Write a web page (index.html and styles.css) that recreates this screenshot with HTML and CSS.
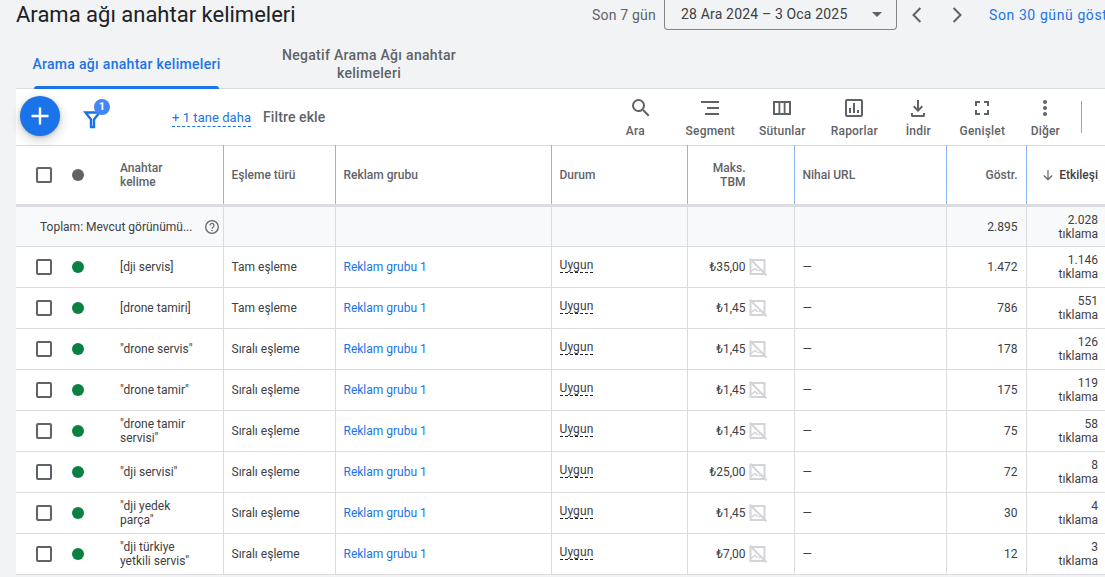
FILE: index.html
```html
<!DOCTYPE html>
<html lang="tr">
<head>
<meta charset="utf-8">
<title>Arama ağı anahtar kelimeleri</title>
<link rel="stylesheet" href="styles.css">
</head>
<body>
<svg class="defs" width="0" height="0" aria-hidden="true">
  <symbol id="noimg" viewBox="0 0 18 18">
    <path d="M1.500 2h14v14h-14z" fill="none" stroke="#d2d4d7" stroke-width="2"/>
    <path d="M1 .8 17.500 17.300" stroke="#d2d4d7" stroke-width="2"/>
    <path d="M2 13.500l4-3 3 2.500M10 13l2-1.500 3 2.500" fill="none" stroke="#d2d4d7" stroke-width="1.500"/>
  </symbol>
</svg>
<header class="top">
  <h1 class="title">Arama ağı anahtar kelimeleri</h1>
  <div class="dates">
    <span class="preset">Son 7 gün</span>
    <div class="range"><span>28 Ara 2024 – 3 Oca 2025</span><i class="caret"></i></div>
    <svg class="chev" width="24" height="24" viewBox="0 0 24 24"><path d="M15.400 5 8.500 12l6.900 7" fill="none" stroke="#5f6368" stroke-width="2"/></svg>
    <svg class="chev" width="24" height="24" viewBox="0 0 24 24"><path d="M8.600 5l6.900 7-6.900 7" fill="none" stroke="#5f6368" stroke-width="2"/></svg>
    <a class="show30">Son 30 günü göster</a>
  </div>
</header>
<nav class="tabs">
  <div class="tab active">Arama ağı anahtar kelimeleri</div>
  <div class="tab second">Negatif Arama Ağı anahtar kelimeleri</div>
</nav>
<section class="panel">
  <div class="toolbar">
    <button class="fab" aria-label="Ekle"><svg width="24" height="24" viewBox="0 0 24 24"><path d="M12 3.500v17M3.500 12h17" stroke="#fff" stroke-width="2.400"/></svg></button>
    <div class="filter">
      <svg width="24" height="24" viewBox="0 0 24 24"><path d="M4.500 7.500h14L13 14.500V22h-3v-7.500z" fill="none" stroke="#1a73e8" stroke-width="2.400"/></svg>
      <span class="badge">1</span>
    </div>
    <a class="more">+ 1 tane daha</a>
    <span class="addf">Filtre ekle</span>
    <div class="tools">
      <div class="tool t-ara"><svg width="24" height="24" viewBox="0 0 24 24"><path fill="#5f6368" d="M15.500 14h-.79l-.28-.27A6.470 6.470 0 0 0 16 9.500 6.500 6.500 0 1 0 9.500 16c1.610 0 3.090-.59 4.230-1.570l.27.28v.79l5 4.990L20.490 19zm-6 0C7.010 14 5 11.990 5 9.500S7.010 5 9.500 5 14 7.010 14 9.500 11.990 14 9.500 14z"/></svg><span>Ara</span></div>
      <div class="tool t-seg"><svg width="24" height="24" viewBox="0 0 24 24"><path fill="#5f6368" d="M3 5h18v2H3zM9 11h12v2H9zM7 17h14v2H7z"/></svg><span>Segment</span></div>
      <div class="tool t-sut"><svg width="24" height="24" viewBox="0 0 24 24"><path fill="#5f6368" d="M3 5v14h18V5zm2 2h3.500v10H5zm5.300 0h3.400v10h-3.400zm5.200 0H19v10h-3.500z"/></svg><span>Sütunlar</span></div>
      <div class="tool t-rap"><svg width="24" height="24" viewBox="0 0 24 24"><path fill="#5f6368" d="M19 3H5a2 2 0 0 0-2 2v14a2 2 0 0 0 2 2h14a2 2 0 0 0 2-2V5a2 2 0 0 0-2-2zm0 16H5V5h14zM7 12h2v5H7zm4-5h2v10h-2zm4 7h2v3h-2z"/></svg><span>Raporlar</span></div>
      <div class="tool t-ind"><svg width="24" height="24" viewBox="0 0 24 24"><path fill="#5f6368" d="M13 4v8.170l2.590-2.580L17 11l-5 5-5-5 1.410-1.410L11 12.170V4zM5 17v2.500c0 .8.700 1.500 1.500 1.500h11c.8 0 1.500-.7 1.500-1.500V17h-2v2H7v-2z"/></svg><span>İndir</span></div>
      <div class="tool t-gen"><svg width="24" height="24" viewBox="0 0 24 24"><path fill="#5f6368" d="M5 5h5v2H7v3H5zM14 5h5v5h-2V7h-3zM5 14h2v3h3v2H5zM17 14h2v5h-5v-2h3z"/></svg><span>Genişlet</span></div>
      <div class="tool t-dig"><svg width="24" height="24" viewBox="0 0 24 24"><path fill="#5f6368" d="M12 8a2 2 0 1 0 0-4 2 2 0 0 0 0 4zm0 2a2 2 0 1 0 0 4 2 2 0 0 0 0-4zm0 6a2 2 0 1 0 0 4 2 2 0 0 0 0-4z"/></svg><span>Diğer</span></div>
      <div class="vsep"></div>
    </div>
  </div>
  <table class="grid">
    <colgroup>
      <col class="c1"><col class="c2"><col class="c3"><col class="c4"><col class="c5"><col class="c6"><col class="c7"><col class="c8">
    </colgroup>
    <thead>
      <tr>
        <th class="kw"><div class="kwcell"><i class="box"></i><i class="dot grey"></i><span>Anahtar<br>kelime</span></div></th>
        <th>Eşleme türü</th>
        <th>Reklam grubu</th>
        <th>Durum</th>
        <th class="right tbm">Maks.<br>TBM</th>
        <th>Nihai URL</th>
        <th class="right">Göstr.</th>
        <th class="right sorted"><svg width="14" height="14" viewBox="0 0 14 14"><path d="M7 2v9.500M2.800 7.500 7 11.700l4.200-4.200" fill="none" stroke="#5f6368" stroke-width="1.200"/></svg>Etkileşi</th>
      </tr>
    </thead>
    <tbody>
      <tr class="total">
        <td class="kw"><div class="totalcell"><span>Toplam: Mevcut görünümü...</span><svg width="16" height="16" viewBox="0 0 16 16"><circle cx="8" cy="8" r="6.300" fill="none" stroke="#5f6368" stroke-width="1.300"/><path d="M6 6.500a2 2 0 1 1 3 1.700c-.7.400-1 .8-1 1.500" fill="none" stroke="#5f6368" stroke-width="1.200"/><circle cx="8" cy="11.500" r=".8" fill="#5f6368"/></svg></div></td>
        <td></td><td></td><td></td><td></td><td></td>
        <td class="right">2.895</td>
        <td class="right">2.028<br>tıklama</td>
      </tr>
      <tr>
        <td class="kw"><div class="kwcell"><i class="box"></i><i class="dot"></i><span>[dji servis]</span></div></td>
        <td>Tam eşleme</td><td><a>Reklam grubu 1</a></td><td><span class="status">Uygun</span></td>
        <td><div class="bid"><span>₺35,00</span><svg width="18" height="18"><use href="#noimg"/></svg></div></td>
        <td>—</td><td class="right">1.472</td><td class="right">1.146<br>tıklama</td>
      </tr>
      <tr>
        <td class="kw"><div class="kwcell"><i class="box"></i><i class="dot"></i><span>[drone tamiri]</span></div></td>
        <td>Tam eşleme</td><td><a>Reklam grubu 1</a></td><td><span class="status">Uygun</span></td>
        <td><div class="bid"><span>₺1,45</span><svg width="18" height="18"><use href="#noimg"/></svg></div></td>
        <td>—</td><td class="right">786</td><td class="right">551<br>tıklama</td>
      </tr>
      <tr>
        <td class="kw"><div class="kwcell"><i class="box"></i><i class="dot"></i><span>"drone servis"</span></div></td>
        <td>Sıralı eşleme</td><td><a>Reklam grubu 1</a></td><td><span class="status">Uygun</span></td>
        <td><div class="bid"><span>₺1,45</span><svg width="18" height="18"><use href="#noimg"/></svg></div></td>
        <td>—</td><td class="right">178</td><td class="right">126<br>tıklama</td>
      </tr>
      <tr>
        <td class="kw"><div class="kwcell"><i class="box"></i><i class="dot"></i><span>"drone tamir"</span></div></td>
        <td>Sıralı eşleme</td><td><a>Reklam grubu 1</a></td><td><span class="status">Uygun</span></td>
        <td><div class="bid"><span>₺1,45</span><svg width="18" height="18"><use href="#noimg"/></svg></div></td>
        <td>—</td><td class="right">175</td><td class="right">119<br>tıklama</td>
      </tr>
      <tr>
        <td class="kw"><div class="kwcell"><i class="box"></i><i class="dot"></i><span>"drone tamir<br>servisi"</span></div></td>
        <td>Sıralı eşleme</td><td><a>Reklam grubu 1</a></td><td><span class="status">Uygun</span></td>
        <td><div class="bid"><span>₺1,45</span><svg width="18" height="18"><use href="#noimg"/></svg></div></td>
        <td>—</td><td class="right">75</td><td class="right">58<br>tıklama</td>
      </tr>
      <tr>
        <td class="kw"><div class="kwcell"><i class="box"></i><i class="dot"></i><span>"dji servisi"</span></div></td>
        <td>Sıralı eşleme</td><td><a>Reklam grubu 1</a></td><td><span class="status">Uygun</span></td>
        <td><div class="bid"><span>₺25,00</span><svg width="18" height="18"><use href="#noimg"/></svg></div></td>
        <td>—</td><td class="right">72</td><td class="right">8<br>tıklama</td>
      </tr>
      <tr>
        <td class="kw"><div class="kwcell"><i class="box"></i><i class="dot"></i><span>"dji yedek<br>parça"</span></div></td>
        <td>Sıralı eşleme</td><td><a>Reklam grubu 1</a></td><td><span class="status">Uygun</span></td>
        <td><div class="bid"><span>₺1,45</span><svg width="18" height="18"><use href="#noimg"/></svg></div></td>
        <td>—</td><td class="right">30</td><td class="right">4<br>tıklama</td>
      </tr>
      <tr>
        <td class="kw"><div class="kwcell"><i class="box"></i><i class="dot"></i><span>"dji türkiye<br>yetkili servis"</span></div></td>
        <td>Sıralı eşleme</td><td><a>Reklam grubu 1</a></td><td><span class="status">Uygun</span></td>
        <td><div class="bid"><span>₺7,00</span><svg width="18" height="18"><use href="#noimg"/></svg></div></td>
        <td>—</td><td class="right">12</td><td class="right">3<br>tıklama</td>
      </tr>
    </tbody>
  </table>
</section>
</body>
</html>
```
FILE: styles.css
```css
* { box-sizing: border-box; }
html, body { margin: 0; height: 577px; overflow: hidden; }
body {
  width: 1105px;
  background: #f1f3f4;
  font-family: Roboto, "Liberation Sans", sans-serif;
  color: #3c4043;
  font-size: 12px;
}
.defs { position: absolute; }

.top { display: flex; align-items: flex-start; height: 44px; padding-left: 16px; white-space: nowrap; }
.title { margin: 0; width: 576px; flex: none; font-weight: 400; font-size: 22px; line-height: 30px; color: #202124; }
.dates { display: flex; align-items: center; height: 30px; flex: none; font-size: 14px; color: #5f6368; }
.preset { width: 72px; flex: none; letter-spacing: .2px; }
.range {
  width: 233px; height: 31px; flex: none; margin-top: -1px;
  display: flex; align-items: center; justify-content: space-between;
  padding: 0 0 0 16px;
  border: 1px solid #80868b; border-top: 0; border-radius: 0 0 4px 4px;
  color: #3c4043; letter-spacing: .17px;
}
.caret { width: 0; height: 0; margin-right: 14px; border: 5px solid transparent; border-top-color: #5f6368; border-bottom: 0; }
.chev { flex: none; margin-left: 8px; }
.chev + .chev { margin-left: 16px; }
.show30 { flex: none; margin-left: 20px; color: #1a73e8; font-weight: 400; letter-spacing: .6px; }

.tabs { display: flex; height: 44px; padding-left: 16px; align-items: stretch; }
.tab { font-size: 14px; line-height: 18px; font-weight: 500; text-align: center; color: #5f6368; letter-spacing: .3px; }
.tab.active {
  width: 221px; padding: 11px 0 0; margin-right: 35px; color: #1a73e8;
  position: relative; white-space: nowrap;
}
.tab.active::after {
  content: ""; position: absolute; left: 18px; width: 185px; bottom: -1px; height: 3px;
  background: #1a73e8; border-radius: 3px 3px 0 0;
}
.tab.second { width: 194px; padding-top: 2px; }

.panel { margin-left: 16px; width: 1090px; background: #fff; border-top: 1px solid #dadce0; }
.toolbar { display: flex; align-items: flex-start; height: 56px; position: relative; }
.fab {
  flex: none; width: 40px; height: 40px; margin: 7px 0 0 4px; padding: 0; border: 0; border-radius: 50%;
  background: #1a73e8; display: flex; align-items: center; justify-content: center;
  box-shadow: 0 1px 3px rgba(60,64,67,.3), 0 4px 8px 3px rgba(60,64,67,.15);
}
.filter { flex: none; width: 32px; height: 30px; margin: 14px 0 0 21px; position: relative; }
.filter svg { display: block; margin-top: 2px; }
.badge {
  position: absolute; left: 13px; top: -4px; width: 16px; height: 16px; border-radius: 50%;
  background: #4285f4; color: #fff; font-size: 11px; font-weight: 700; line-height: 16px; text-align: center;
}
.more { flex: none; margin: 20px 0 0 59px; color: #1a73e8; font-size: 13px; line-height: 17px; letter-spacing: .05px; border-bottom: 1px dashed #1a73e8; height: 17px; box-sizing: content-box; }
.addf { flex: none; margin: 20px 0 0 12px; font-size: 14px; line-height: 17px; letter-spacing: .1px; color: #5f6368; font-weight: 500; }
.tools { flex: 1; position: relative; height: 56px; }
.tool { position: absolute; top: 7px; display: flex; flex-direction: column; align-items: center; width: 80px; color: #5f6368; font-weight: 500; }
.tool span { font-size: 12px; line-height: 16px; margin-top: 3px; white-space: nowrap; letter-spacing: .2px; }
.tool svg { display: block; }
.t-ara svg { margin-left: 12px; }
.t-ara { left: 270px; } .t-seg { left: 345px; } .t-sut { left: 417px; } .t-rap { left: 489px; }
.t-ind { left: 553px; } .t-gen { left: 617px; } .t-dig { left: 680px; }
.vsep { position: absolute; left: 756px; top: 12px; width: 1px; height: 32px; background: #9aa0a6; }

.grid { border-collapse: collapse; table-layout: fixed; width: 1090px; border-top: 1px solid #dadce0; }
.c1 { width: 207px; } .c2 { width: 112px; } .c3 { width: 216px; } .c4 { width: 136px; }
.c5 { width: 107px; } .c6 { width: 152px; } .c7 { width: 80px; } .c8 { width: 80px; }
.grid th, .grid td { padding: 0 8px; border-left: 1px solid #dadce0; border-bottom: 1px solid #dadce0; line-height: 14px; text-align: left; overflow: hidden; }
.grid tr > :first-child { border-left: 0; }
.grid th {
  height: 60px; font-weight: 500; color: #5f6368; font-size: 12px; border-left-color: #8ab4f8;
  border-bottom: 3px solid #dadce0;
}
.grid td { height: 41px; }
.grid tr.total td { background: #f8f9fa; }
.grid .right { text-align: right; }
.grid .tbm { padding-right: 48px; }
.grid .kw { padding: 0; }
.grid a { color: #1a73e8; }
.grid .sorted { white-space: nowrap; color: #3c4043; font-weight: 500; }
.sorted svg { vertical-align: -3px; margin-right: 4px; }

.kwcell { display: flex; align-items: center; }
.box { flex: none; width: 16px; height: 16px; margin-left: 20px; border: 2px solid #5f6368; border-radius: 2px; }
.dot { flex: none; width: 12px; height: 12px; margin-left: 20px; border-radius: 50%; background: #0b8043; }
.dot.grey { background: #5f6368; }
.kwcell span { margin-left: 36px; }
.totalcell { display: flex; align-items: center; padding-left: 24px; }
.totalcell span { width: 164px; flex: none; white-space: nowrap; }
.status { display: inline-block; border-bottom: 1px dashed #202124; line-height: 13px; position: relative; top: -2px; letter-spacing: .1px; }
.bid { display: flex; align-items: center; justify-content: flex-end; margin-right: 19px; }
.bid svg { margin-left: 3px; flex: none; }
```
